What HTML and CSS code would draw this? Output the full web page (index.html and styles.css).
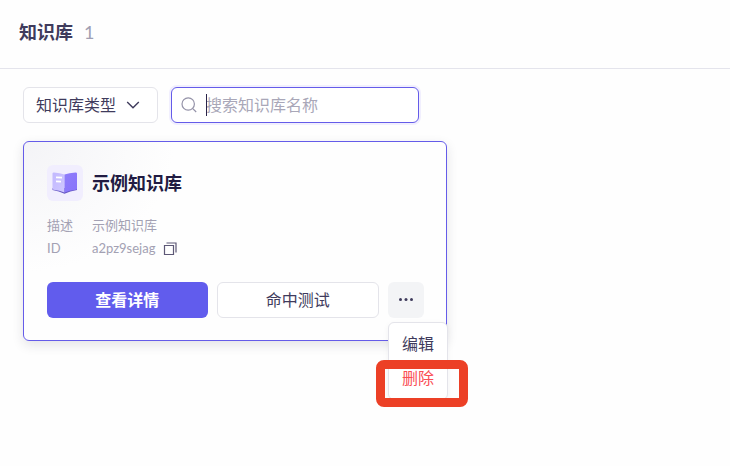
FILE: index.html
```
<!DOCTYPE html>
<html lang="zh-CN">
<head>
<meta charset="utf-8">
<meta name="viewport" content="width=device-width, initial-scale=1">
<title>知识库</title>
<link rel="stylesheet" href="styles.css">
</head>
<body>
<header class="page-header">
  <h1 class="page-title">知识库</h1>
  <span class="page-count">1</span>
</header>
<main class="content">
  <div class="toolbar">
    <button class="type-filter" type="button">
      知识库类型
      <svg class="chevron" viewBox="0 0 14 8" width="14" height="8" aria-hidden="true"><path d="M1.2 1l5.8 5.8L12.8 1" fill="none" stroke="currentColor" stroke-width="1.4"/></svg>
    </button>
    <label class="search">
      <svg class="search-icon" viewBox="0 0 16 16" width="16" height="16" aria-hidden="true"><circle cx="7.2" cy="7" r="6.2" fill="none" stroke="currentColor" stroke-width="1.2"/><path d="M11.8 11.6l3.4 3.4" stroke="currentColor" stroke-width="1.2"/></svg>
      <span class="caret" aria-hidden="true"></span>
      <input class="search-input" type="text" placeholder="搜索知识库名称" aria-label="搜索知识库名称">
    </label>
  </div>
  <article class="card">
    <div class="card-head">
      <span class="book">
        <svg viewBox="0 0 36 36" width="36" height="36" aria-hidden="true">
          <defs>
            <linearGradient id="left-page" x1="0" y1="0" x2="1" y2="1"><stop offset="0" stop-color="#c2b8ff"/><stop offset="1" stop-color="#cfc8ff"/></linearGradient>
            <linearGradient id="right-page" x1="0" y1="0" x2="1" y2="1"><stop offset="0" stop-color="#8f7dfa"/><stop offset="1" stop-color="#8873fb"/></linearGradient>
          </defs>
          <path d="M5.5 25Q12 26 17.500 28.800Q23 26 30 25V23H5.500z" fill="#6657c4"/>
          <path d="M5.500 8.500Q5.500 7.300 7 7.400Q13 7.600 17.500 9.500V27.500Q12.500 25.200 6.500 24.800Q5.500 24.700 5.500 23.500z" fill="url(#left-page)"/>
          <path d="M17.500 9.500Q22 7.600 28.500 7.400Q30 7.300 30 8.500V23.500Q30 24.700 28.800 24.800Q22.500 25.200 17.500 27.500z" fill="url(#right-page)"/>
          <path d="M9 12.300l6 .3M9 16.300l5 .3" stroke="#fff" stroke-width="1.800"/>
        </svg>
      </span>
      <h2 class="card-title">示例知识库</h2>
    </div>
    <dl class="meta">
      <dt>描述</dt>
      <dd>示例知识库</dd>
      <dt>ID</dt>
      <dd>a2pz9sejag
        <button class="copy" type="button" aria-label="复制 ID"><svg viewBox="0 0 14 14" width="14" height="14" aria-hidden="true"><path d="M1.500 3.500h9v9h-9zM3.500 1h9.500v9.500" fill="none" stroke="currentColor" stroke-width="1.200"/></svg></button>
      </dd>
    </dl>
    <div class="actions">
      <button class="btn btn-primary" type="button">查看详情</button>
      <button class="btn btn-outline" type="button">命中测试</button>
      <div class="more">
        <button class="btn btn-more" type="button" aria-label="更多"><svg viewBox="0 0 16 4" width="16" height="4" aria-hidden="true"><circle cx="2.500" cy="1.500" r="1.500" fill="currentColor"/><circle cx="8" cy="1.500" r="1.500" fill="currentColor"/><circle cx="13.500" cy="1.500" r="1.500" fill="currentColor"/></svg></button>
        <div class="menu">
          <button class="menu-item" type="button">编辑</button>
          <button class="menu-item menu-danger" type="button">删除</button>
          <span class="marker" aria-hidden="true"></span>
        </div>
      </div>
    </div>
  </article>
</main>
</body>
</html>
```
FILE: styles.css
```
* {
  box-sizing: border-box;
}

body {
  margin: 0;
  min-height: 100vh;
  background: #fefefe;
  color: #3f3b5c;
  font: 16px/24px Lato, "Noto Sans CJK SC", sans-serif;
}

button,
input {
  font: inherit;
  color: inherit;
}

button {
  padding: 0;
  border: 0;
  background: none;
}

h1,
h2,
dl,
dd {
  margin: 0;
}

svg {
  display: block;
}

.page-header {
  display: flex;
  align-items: center;
  gap: 11px;
  padding: 20px 19px 24px;
  border-bottom: 1px solid #e4e4ec;
}

.page-title,
.page-count {
  font-size: 18px;
  line-height: 24px;
}

.page-count {
  color: #a09eb2;
}

.content {
  padding: 18px 23px;
}

.toolbar {
  display: flex;
  gap: 13px;
  margin-bottom: 18px;
}

.type-filter {
  display: flex;
  align-items: center;
  justify-content: space-between;
  width: 135px;
  height: 36px;
  padding: 0 17px 0 12px;
  border: 1px solid #e4e4ea;
  border-radius: 6px;
  background: #fff;
}

.search {
  position: relative;
  display: flex;
  align-items: center;
  gap: 9px;
  width: 248px;
  height: 36px;
  padding: 0 9px;
  border: 1px solid #655ce9;
  border-radius: 6px;
  background: #fff;
  box-shadow: 0 0 0 2px #f1effe;
}

.search-icon {
  flex: none;
  color: #9492a8;
}

.search-input {
  flex: 1;
  min-width: 0;
  padding: 0;
  border: 0;
  outline: 0;
  background: none;
}

.search-input::placeholder {
  color: #a9a7b8;
  opacity: 1;
}

.caret {
  position: absolute;
  left: 34px;
  top: 6px;
  width: 1px;
  height: 22px;
  background: #29244a;
}

.card {
  max-width: 424px;
  padding: 23px 22px 22px 23px;
  border: 1px solid #655ce9;
  border-radius: 6px;
  background: radial-gradient(ellipse 150px 130px at 0 0, #f4f4f7, #fefefe);
  box-shadow: 0 4px 12px rgba(30, 30, 60, 0.12);
}

.card-head {
  display: flex;
  align-items: center;
  gap: 9px;
}

.book {
  border-radius: 6px;
  background: #f1eefe;
}

.card-title {
  color: #211b42;
  font-size: 18px;
  line-height: 24px;
}

.meta {
  display: grid;
  grid-template-columns: 36px 1fr;
  column-gap: 9px;
  margin-top: 13px;
  color: #a3a1b3;
  font-size: 13px;
  line-height: 23px;
}

.meta dd {
  display: flex;
  align-items: center;
  gap: 8px;
}

.copy {
  color: #5d5876;
}

.actions {
  display: flex;
  gap: 9px;
  margin-top: 22px;
}

.btn {
  display: flex;
  align-items: center;
  justify-content: center;
  height: 36px;
  border-radius: 6px;
}

.btn-primary,
.btn-outline {
  flex: 1;
}

.btn-primary {
  background: #615ced;
  color: #fff;
  font-weight: 700;
}

.btn-outline {
  border: 1px solid #e4e4ea;
  background: #fff;
}

.btn-more {
  width: 36px;
  background: #f3f4f6;
}

.more {
  position: relative;
}

.menu {
  position: absolute;
  top: 40px;
  left: 0;
  width: 60px;
  padding: 4px 0;
  border: 1px solid #e4e4ea;
  border-radius: 6px;
  background: #fff;
  box-shadow: 0 2px 6px rgba(30, 30, 60, 0.05);
}

.menu-item {
  display: block;
  width: 100%;
  height: 34px;
  text-align: center;
}

.menu-danger {
  color: #fa4d55;
}

.marker {
  position: absolute;
  top: 37px;
  left: -13px;
  width: 92px;
  height: 47px;
  border: 9px solid #ec4026;
  border-radius: 8px;
  pointer-events: none;
}
```
